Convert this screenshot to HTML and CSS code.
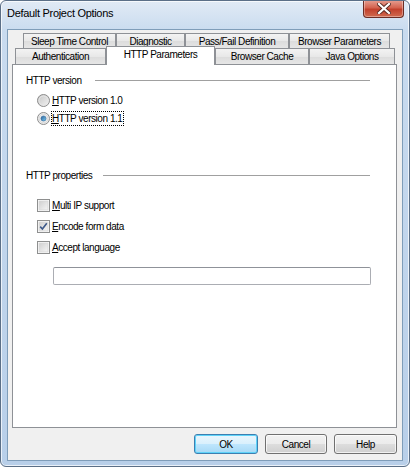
FILE: index.html
```html
<!DOCTYPE html>
<html lang="en">

<head>
    <meta charset="UTF-8">
    <title>Default Project Options</title>
    <link rel="stylesheet" href="styles.css">
</head>

<body>
    <div class="window">
        <div class="titlebar">
            <span class="title">Default Project Options</span>
            <div class="close">
                <svg width="14" height="11" viewBox="0 0 14 11">
                    <path d="M2 1 L12 10 M12 1 L2 10" stroke="#5a2a22" stroke-width="4" stroke-linecap="square"/>
                    <path d="M2 1 L12 10 M12 1 L2 10" stroke="#fff" stroke-width="2.2" stroke-linecap="square"/>
                </svg>
            </div>
        </div>

        <div class="client">
            <div class="tabs">
                <div class="tab-row back">
                    <div class="tab" style="width:93px">Sleep Time Control</div>
                    <div class="tab" style="width:69px">Diagnostic</div>
                    <div class="tab" style="width:104px">Pass/Fail Definition</div>
                    <div class="tab" style="width:101px">Browser Parameters</div>
                </div>
                <div class="tab-row front">
                    <div class="tab" style="width:91px">Authentication</div>
                    <div class="tab selected" style="width:109px">HTTP Parameters</div>
                    <div class="tab" style="width:94px">Browser Cache</div>
                    <div class="tab" style="width:86px">Java Options</div>
                </div>
            </div>

            <div class="panel">
                <div class="group-head"><span>HTTP version</span><i class="rule"></i></div>
                <div class="option first">
                    <svg class="radio" width="13" height="13" viewBox="0 0 13 13">
                        <defs>
                            <linearGradient id="rg" x1="0" y1="0" x2="1" y2="1">
                                <stop offset="0" stop-color="#c4c4c4"/>
                                <stop offset="1" stop-color="#f4f4f4"/>
                            </linearGradient>
                        </defs>
                        <circle cx="6.5" cy="6.5" r="6" fill="url(#rg)" stroke="#8c8c8c"/>
                        <circle cx="6.5" cy="6.5" r="4.5" fill="none" stroke="#e6e6e6"/>
                    </svg>
                    <span><u>H</u>TTP version 1.0</span>
                </div>
                <div class="option">
                    <svg class="radio" width="13" height="13" viewBox="0 0 13 13">
                        <defs>
                            <linearGradient id="dot" x1="0" y1="0" x2="1" y2="1">
                                <stop offset="0" stop-color="#2a5d96"/>
                                <stop offset="1" stop-color="#7ccdf2"/>
                            </linearGradient>
                        </defs>
                        <circle cx="6.5" cy="6.5" r="6" fill="#eeeeee" stroke="#8c8c8c"/>
                        <circle cx="6.5" cy="6.5" r="4.4" fill="none" stroke="#d8d8d8"/>
                        <circle cx="6.5" cy="6.5" r="2.6" fill="url(#dot)" stroke="#2e5f90" stroke-width="0.5"/>
                    </svg>
                    <span class="focus"><u>H</u>TTP version 1.1</span>
                </div>

                <div class="group-head second"><span>HTTP properties</span><i class="rule"></i></div>
                <div class="check-row first">
                    <svg class="check" width="13" height="13" viewBox="0 0 13 13">
                        <defs>
                            <linearGradient id="cg" x1="0" y1="0" x2="1" y2="1">
                                <stop offset="0" stop-color="#cfcfcf"/>
                                <stop offset="1" stop-color="#f6f6f6"/>
                            </linearGradient>
                        </defs>
                        <rect x="0.5" y="0.5" width="12" height="12" fill="#fff" stroke="#8e8f8f"/>
                        <rect x="2" y="2" width="9" height="9" fill="url(#cg)" stroke="#d8d8d8" stroke-width="0.8"/>
                    </svg>
                    <span><u>M</u>ulti IP support</span>
                </div>
                <div class="check-row">
                    <svg class="check" width="13" height="13" viewBox="0 0 13 13">
                        <rect x="0.5" y="0.5" width="12" height="12" fill="#fff" stroke="#8e8f8f"/>
                        <rect x="2" y="2" width="9" height="9" fill="url(#cg)" stroke="#d8d8d8" stroke-width="0.8"/>
                        <path d="M3.2 6.6 L5.4 9 L9.8 3.2" fill="none" stroke="#3e5a8a" stroke-width="1.6"/>
                    </svg>
                    <span><u>E</u>ncode form data</span>
                </div>
                <div class="check-row">
                    <svg class="check" width="13" height="13" viewBox="0 0 13 13">
                        <rect x="0.5" y="0.5" width="12" height="12" fill="#fff" stroke="#8e8f8f"/>
                        <rect x="2" y="2" width="9" height="9" fill="url(#cg)" stroke="#d8d8d8" stroke-width="0.8"/>
                    </svg>
                    <span><u>A</u>ccept language</span>
                </div>
                <div class="textbox"></div>
            </div>

            <div class="buttons">
                <button class="default" style="width:64px">OK</button>
                <button style="width:62px">Cancel</button>
                <button style="width:63px">Help</button>
            </div>
        </div>
    </div>
</body>

</html>
```

FILE: styles.css
```css
:root {
    --frame: #5b6f87;
    --face: #f0f0f0;
    --tab-border: #8e9196;
    --text: #000;
    --font: "Liberation Sans", Arial, sans-serif;
}

* {
    box-sizing: border-box;
}

body {
    margin: 0;
    padding: 0;
    background: #fff;
    font-family: var(--font);
    font-size: 10px;
    letter-spacing: -0.45px;
    color: var(--text);
}

.window {
    width: 410px;
    height: 467px;
    border: 1px solid var(--frame);
    border-radius: 6px;
    background: linear-gradient(#e1eaf5, #c9dbef 30px, #b8cfe9);
    box-shadow: inset 0 0 0 1px rgba(255, 255, 255, 0.7);
    overflow: hidden;
}

.titlebar {
    height: 28px;
    display: flex;
    justify-content: space-between;
    align-items: flex-start;
}

.title {
    font-size: 11px;
    letter-spacing: -0.3px;
    margin: 6px 0 0 6px;
}

.close {
    width: 41px;
    height: 18px;
    margin: -1px 5px 0 0;
    border: 1px solid #6b2c24;
    border-top: none;
    border-radius: 0 0 4px 4px;
    background: linear-gradient(#e7a194, #d4634f 45%, #c2402c 55%, #d06a4f);
    box-shadow: inset 0 0 0 1px rgba(255, 255, 255, 0.35);
    display: flex;
    align-items: center;
    justify-content: center;
}

.client {
    height: 432px;
    margin: 0 6px;
    border: 1px solid #7f9db9;
    background: var(--face);
}

.tabs {
    padding-top: 3px;
}

.tab-row {
    display: flex;
}

.tab-row.back {
    margin-left: 15px;
}

.tab-row.front {
    margin-left: 7px;
    height: 16px;
    align-items: flex-end;
}

.tab {
    height: 15px;
    border: 1px solid var(--tab-border);
    border-bottom: none;
    background: linear-gradient(#f3f3f3, #e8e8e8 50%, #dcdcdc 51%, #e6e6e6);
    text-align: center;
    line-height: 15px;
    white-space: nowrap;
}

.front .tab {
    height: 16px;
    line-height: 15px;
}

.front .tab.selected {
    height: 19px;
    margin-bottom: -1px;
    background: #fff;
    position: relative;
    z-index: 1;
    line-height: 15px;
}

.panel {
    width: 385px;
    height: 364px;
    margin-left: 4px;
    border: 1px solid var(--tab-border);
    background: #fff;
    padding: 8px 26px 0 13px;
}

.group-head {
    display: flex;
    align-items: center;
    height: 14px;
}

.group-head.second {
    margin-top: 41px;
}

.rule {
    flex: 1;
    height: 1px;
    margin-left: 13px;
    background: #a0a0a0;
}

.group-head.second .rule {
    margin-left: 11px;
}

.option {
    display: flex;
    align-items: center;
    height: 18px;
    padding-left: 11px;
}

.option.first {
    margin-top: 4px;
}

.radio,
.check {
    flex: none;
    margin-right: 2px;
}

.focus {
    outline: 1px dotted #000;
    outline-offset: 0;
    padding: 0 1px 0 0;
    line-height: 13px;
}

.check-row {
    display: flex;
    align-items: center;
    height: 21px;
    padding-left: 11px;
}

.check-row.first {
    margin-top: 13px;
}

.textbox {
    width: 318px;
    height: 18px;
    margin: 9px 0 0 27px;
    border: 1px solid #abadb3;
    border-top-color: #8f9299;
    border-radius: 2px;
    background: #fff;
}

.buttons {
    display: flex;
    justify-content: flex-end;
    gap: 7px;
    padding: 6px 5px 0 0;
}

button {
    height: 20px;
    padding: 0;
    border: 1px solid #707070;
    border-radius: 3px;
    background: linear-gradient(#f2f2f2, #ebebeb 50%, #dddddd 51%, #cfcfcf);
    box-shadow: inset 0 0 0 1px rgba(255, 255, 255, 0.7);
    font-family: inherit;
    font-size: 10px;
    letter-spacing: -0.45px;
    color: #000;
}

button.default {
    border-color: #3c7fb1;
    background: linear-gradient(#eaf6fd, #d9f0fc 50%, #bee6fd 51%, #a7d9f5);
    box-shadow: inset 0 0 0 1px #5fd3f9;
}
```
